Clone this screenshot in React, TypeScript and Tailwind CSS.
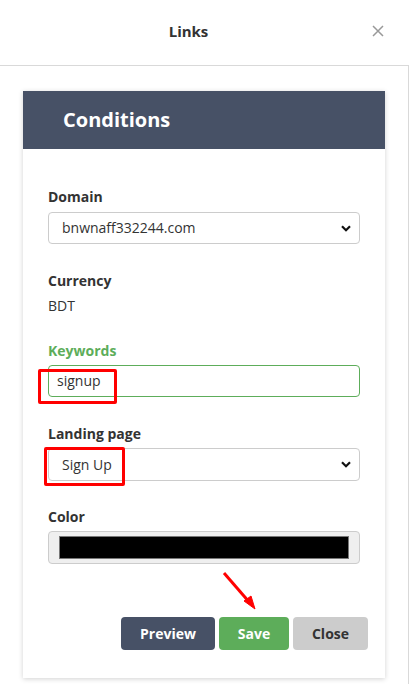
import React from "react";

function Chevron() {
  return (
    <svg width="10" height="7" viewBox="0 0 10 7" className="shrink-0">
      <path d="M1 1.2 L5 5.2 L9 1.2" fill="none" stroke="#111" strokeWidth="2.2" />
    </svg>
  );
}

export default function App() {
  return (
    <div
      className="relative w-[409px] h-[684px] bg-white overflow-hidden text-[#333]"
      style={{ fontFamily: '"Open Sans", "Noto Sans", sans-serif' }}
    >
      <div className="relative h-[65px] flex items-center justify-center pr-[32px] pb-[4px]">
        <span className="text-[15px] font-bold leading-5 text-[#333]">Links</span>
        <svg
          className="absolute left-[372px] top-[25px]"
          width="12"
          height="12"
          viewBox="0 0 12 12"
        >
          <path d="M1 1 L11 11 M11 1 L1 11" stroke="#999" strokeWidth="1.5" fill="none" />
        </svg>
      </div>
      <div className="w-[409px] h-[619px] border-t border-r border-[#d9d9d9] pt-[25px] pl-[23px]">
        <div className="w-[362px] bg-white shadow-[0_1px_5px_rgba(0,0,0,0.18)]">
          <div className="h-[58px] bg-[#475166] flex items-center pl-[40px]">
            <span className="text-[20px] font-bold text-white leading-7">Conditions</span>
          </div>
          <div className="px-[25px] pt-[38px] pb-[28px]">
            <div className="text-[14px] font-bold leading-5">Domain</div>
            <div className="mt-[5px] h-[32px] border border-[#ccc] rounded-[4px] flex items-center justify-between pl-[13px] pr-[8px]">
              <span className="text-[14px] leading-5">bnwnaff332244.com</span>
              <Chevron />
            </div>

            <div className="mt-[27px] text-[14px] font-bold leading-5">Currency</div>
            <div className="mt-[5px] text-[14px] leading-5">BDT</div>

            <div className="mt-[25px] text-[14px] font-bold leading-5 text-[#5dad5a]">Keywords</div>
            <div className="relative mt-[4px]">
              <div className="h-[32px] border border-[#5dad5a] rounded-[4px] flex items-center pl-[8px]">
                <span className="text-[14px] leading-5">signup</span>
              </div>
              <div className="absolute left-[-10px] top-[4px] w-[79px] h-[35px] border-[3px] border-[#ff0000] rounded-[2px]" />
            </div>

            <div className="mt-[27px] text-[14px] font-bold leading-5">Landing page</div>
            <div className="relative mt-[4px]">
              <div className="h-[33px] border border-[#ccc] rounded-[4px] flex items-center justify-between pl-[13px] pr-[8px]">
                <span className="text-[14px] leading-5">Sign Up</span>
                <Chevron />
              </div>
              <div className="absolute left-[-4px] top-[-1px] w-[81px] h-[39px] border-[3px] border-[#ff0000] rounded-[2px]" />
            </div>

            <div className="mt-[26px] text-[14px] font-bold leading-5">Color</div>
            <div className="mt-[4px] h-[33px] border border-[#ccc] rounded-[4px] bg-[#efefef] px-[10px] py-[4px]">
              <div className="h-full bg-black border border-[#777]" />
            </div>

            <div className="mt-[53px] mr-[-8px] flex justify-end gap-[4px]">
              <button className="w-[94px] h-[33px] rounded-[4px] bg-[#475166] text-white text-[14px] font-bold">
                Preview
              </button>
              <button className="w-[70px] h-[33px] rounded-[4px] bg-[#5dad5a] text-white text-[14px] font-bold">
                Save
              </button>
              <button className="w-[75px] h-[33px] rounded-[4px] bg-[#cccccc] text-[#333] text-[14px] font-bold">
                Close
              </button>
            </div>
          </div>
        </div>
      </div>
      <svg
        className="absolute left-[218px] top-[567px]"
        width="46"
        height="48"
        viewBox="0 0 46 48"
      >
        <path d="M6 6 L32 36" stroke="#ff0000" strokeWidth="3" fill="none" />
        <path d="M26 34 L37 42 L33 29 Z" fill="#ff0000" stroke="#ff0000" strokeWidth="1" />
      </svg>
    </div>
  );
}
